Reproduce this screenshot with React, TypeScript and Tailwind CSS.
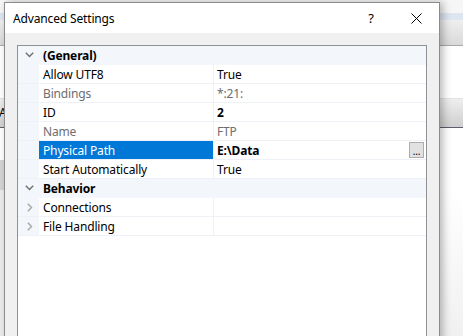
import React from "react";

const font = { fontFamily: '"Noto Sans", "Open Sans", sans-serif', letterSpacing: "-0.15px" };

function ChevDown() {
  return (
    <svg width="9" height="6" viewBox="0 0 9 6" className="block">
      <path d="M0.8 0.8 L4.5 4.5 L8.2 0.8" fill="none" stroke="#6f6f6f" strokeWidth="1.4" />
    </svg>
  );
}
function ChevRight() {
  return (
    <svg width="6" height="9" viewBox="0 0 6 9" className="block">
      <path d="M0.8 0.8 L4.5 4.5 L0.8 8.2" fill="none" stroke="#a6a6a6" strokeWidth="1.4" />
    </svg>
  );
}

type Row =
  | { kind: "cat"; label: string }
  | { kind: "prop"; label: string; value: string; disabled?: boolean; bold?: boolean; selected?: boolean; button?: boolean; expand?: boolean };

const rows: Row[] = [
  { kind: "cat", label: "(General)" },
  { kind: "prop", label: "Allow UTF8", value: "True" },
  { kind: "prop", label: "Bindings", value: "*:21:", disabled: true },
  { kind: "prop", label: "ID", value: "2", bold: true },
  { kind: "prop", label: "Name", value: "FTP", disabled: true },
  { kind: "prop", label: "Physical Path", value: "E:\\Data", bold: true, selected: true, button: true },
  { kind: "prop", label: "Start Automatically", value: "True" },
  { kind: "cat", label: "Behavior" },
  { kind: "prop", label: "Connections", value: "", expand: true },
  { kind: "prop", label: "File Handling", value: "", expand: true },
];

function GridRow({ r }: { r: Row }) {
  if (r.kind === "cat") {
    return (
      <div className="flex h-[19px] bg-[#f3f6fa] border-b border-[#f3f6fa]">
        <div className="w-[21px] flex items-center justify-center pl-[1px]">
          <ChevDown />
        </div>
        <div className="pl-[4px] pt-[1px] flex items-center font-bold text-black">{r.label}</div>
      </div>
    );
  }
  const labelColor = r.selected ? "text-white" : r.disabled ? "text-[#6d6d6d]" : "text-black";
  const valueColor = r.disabled ? "text-[#6d6d6d]" : "text-black";
  return (
    <div className="flex h-[19px] border-b border-[#eef1f6]">
      <div className="w-[21px] bg-[#f3f6fa] flex items-center justify-center pl-[2px]">
        {r.expand ? <ChevRight /> : null}
      </div>
      <div className={`w-[174px] pl-[4px] pt-[1px] flex items-center ${labelColor} ${r.selected ? "bg-[#0078d7]" : ""}`}>
        {r.label}
      </div>
      <div className="w-px bg-[#eef1f6]" />
      <div className={`flex-1 pl-[3px] pr-[2px] flex items-center justify-between ${valueColor} ${r.bold ? "font-bold" : ""}`}>
        <span className="pt-[1px]">{r.value}</span>
        {r.button ? (
          <div className="w-[15px] h-[16px] border border-[#adadad] bg-[#e1e1e1] flex items-end justify-center text-[10px] leading-[12px] font-normal text-black">
            ...
          </div>
        ) : null}
      </div>
    </div>
  );
}

export default function App() {
  return (
    <div className="relative w-[463px] h-[336px] overflow-hidden bg-white text-[12px]" style={font}>
      {/* background window */}
      <div className="flex flex-col w-full">
        <div className="h-[13px] bg-[#f6f6f6]" />
        <div className="h-[7px] bg-[#dce5f0]" />
        <div className="h-[25px] bg-gradient-to-b from-[#efefef] to-[#d9d9d9]" />
        <div className="h-px bg-[#a8a8a8]" />
        <div className="h-[52px] bg-white" />
        <div className="h-px bg-[#e2e2e2]" />
        <div className="h-[28px] bg-gradient-to-b from-[#eeeeee] to-[#cfcfcf] flex items-center text-black">
          <span className="ml-[-1px]">A</span>
        </div>
        <div className="h-px bg-[#5e5e6e]" />
        <div className="h-[32px] bg-white" />
        <div className="h-[30px] flex">
          <div className="w-[4px] bg-[#d4d4d4]" />
          <div className="flex-1 bg-white" />
        </div>
        <div className="h-[150px] flex">
          <div className="w-[4px] bg-[#ececec]" />
          <div className="flex-1 bg-gradient-to-b from-white to-[#f0f0f0]" />
        </div>
      </div>

      {/* dialog */}
      <div className="absolute left-[4px] top-[2px] w-[436px] h-[360px] border border-[#8c8c8c] bg-[#f0f0f0] flex flex-col shadow-[3px_0_8px_rgba(0,0,0,0.28)]">
        <div className="h-[30px] bg-white flex items-center shrink-0">
          <span className="pl-[8px] pt-[1px] flex-1 text-black">Advanced Settings</span>
          <span className="w-[20px] pt-[1px] text-center text-black mr-[30px] text-[13px]">?</span>
          <svg width="11" height="11" viewBox="0 0 11 11" className="mr-[17px]">
            <path d="M0.5 0.5 L10.5 10.5 M10.5 0.5 L0.5 10.5" stroke="#000" strokeWidth="1" fill="none" />
          </svg>
        </div>
        <div className="flex-1 pt-[12px] px-[12px]">
          <div className="h-full border border-[#8f9194] bg-white flex flex-col">
            {rows.map((r, i) => (
              <GridRow key={i} r={r} />
            ))}
          </div>
        </div>
      </div>
    </div>
  );
}
